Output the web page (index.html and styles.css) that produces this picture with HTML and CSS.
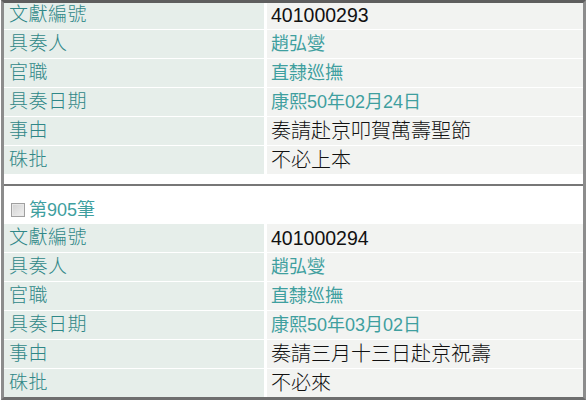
FILE: index.html
```html
<!DOCTYPE html>
<html lang="zh-Hant">
<head>
<meta charset="utf-8">
<link rel="stylesheet" href="styles.css">
</head>
<body>
<div class="frame">
  <div class="record record-first">
    <div class="grid">
      <div class="lbl">文獻編號</div><div class="val black num">401000293</div>
      <div class="lbl">具奏人</div><div class="val teal">趙弘燮</div>
      <div class="lbl">官職</div><div class="val teal">直隸巡撫</div>
      <div class="lbl">具奏日期</div><div class="val teal">康熙50年02月24日</div>
      <div class="lbl">事由</div><div class="val black">奏請赴京叩賀萬壽聖節</div>
      <div class="lbl">硃批</div><div class="val black">不必上本</div>
    </div>
  </div>
  <div class="record record-next">
    <div class="head"><span class="check"></span><span class="head-text">第905筆</span></div>
    <div class="grid">
      <div class="lbl">文獻編號</div><div class="val black num">401000294</div>
      <div class="lbl">具奏人</div><div class="val teal">趙弘燮</div>
      <div class="lbl">官職</div><div class="val teal">直隸巡撫</div>
      <div class="lbl">具奏日期</div><div class="val teal">康熙50年03月02日</div>
      <div class="lbl">事由</div><div class="val black">奏請三月十三日赴京祝壽</div>
      <div class="lbl">硃批</div><div class="val black">不必來</div>
    </div>
  </div>
</div>
</body>
</html>
```

FILE: styles.css
```css
html, body {
  margin: 0;
  padding: 0;
  background: #ffffff;
}

body {
  font-family: "Liberation Sans", "Noto Sans CJK TC", sans-serif;
  width: 588px;
  height: 402px;
  overflow: hidden;
}

.frame {
  margin: 0 2px 0 1px;
  border: 3px solid #8c8c8c;
  border-top-color: #5e5e5e;
  border-bottom-color: #6e6e6e;
  overflow: hidden;
  background: #ffffff;
}

.record-first {
  margin-top: -2px;
  padding-bottom: 10px;
}

.record-next {
  border-top: 2px solid #777777;
}

.grid {
  display: grid;
  grid-template-columns: 260px 1fr;
  grid-auto-rows: 28px;
  column-gap: 3px;
  row-gap: 1px;
}

.lbl {
  background: #e6eeea;
  color: #2f8787;
  font-size: 19px;
  font-weight: 300;
  line-height: 28px;
  padding-left: 5px;
  white-space: nowrap;
  letter-spacing: 0.5px;
}

.val {
  background: #f2f3f1;
  line-height: 28px;
  padding-left: 4px;
  white-space: nowrap;
}

.black {
  color: #111111;
  font-size: 20px;
  font-weight: 300;
}

.num {
  font-size: 19.5px;
  font-weight: 400;
}

.teal {
  color: #3f9f9f;
  font-size: 18px;
  font-weight: 400;
}

.head {
  box-sizing: border-box;
  height: 38px;
  padding-top: 10px;
  display: flex;
  align-items: center;
  padding-left: 7px;
  gap: 4px;
}

.check {
  width: 12px;
  height: 12px;
  border: 1px solid #a0a0a0;
  background: linear-gradient(135deg, #d2d2d2, #f0f0f0);
  box-shadow: inset 0 0 0 1px #e8e8e8;
}

.head-text {
  color: #3f9f9f;
  font-size: 18px;
  font-weight: 400;
  line-height: 28px;
}
```
